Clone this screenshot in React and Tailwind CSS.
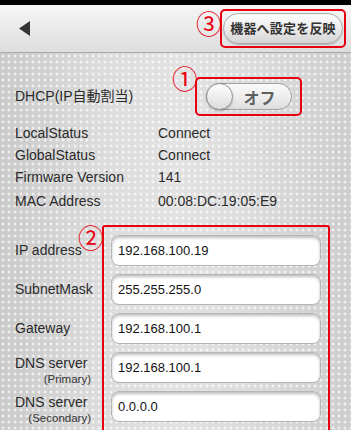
import React from 'react'

const font = { fontFamily: '"Liberation Sans", "Noto Sans CJK JP", sans-serif' }

const info = [
  ['LocalStatus', 'Connect'],
  ['GlobalStatus', 'Connect'],
  ['Firmware Version', '141'],
]

const fields = [
  { label: 'IP address', value: '192.168.100.19' },
  { label: 'SubnetMask', value: '255.255.255.0' },
  { label: 'Gateway', value: '192.168.100.1' },
  { label: 'DNS server', sub: '(Primary)', value: '192.168.100.1' },
  { label: 'DNS server', sub: '(Secondary)', value: '0.0.0.0' },
]

const Mark = ({ children, className }) => (
  <span className={`absolute text-[#e60012] text-[19px] leading-none font-['Noto_Sans_CJK_JP',sans-serif] ${className}`}>
    {children}
  </span>
)

const App = () => {
  return (
    <div className="w-[351px] h-[430px] overflow-hidden flex flex-col text-[#2b2b2b]" style={font}>
      <div className="h-[5px] bg-black shrink-0" />

      {/* barra superior */}
      <div className="h-[48px] shrink-0 flex items-center pl-[19px] pr-[5px] bg-linear-to-b from-[#f6f6f6] to-[#dedede] border-b border-[#a9a9a9] relative">
        <svg width="11" height="15" viewBox="0 0 11 15" className="mb-[1px]">
          <polygon points="0,7.5 11,0 11,15" fill="#333" />
        </svg>
        <div className="ml-auto relative">
          <Mark className="-left-[24px] top-[1px] scale-[1.35] origin-top-left">③</Mark>
          <div className="border-2 border-[#e60012] rounded-[5px] w-[126px] h-[39px] flex items-center justify-center">
            <button className="w-[120px] h-[31px] rounded-full border border-[#a8a8a8] bg-linear-to-b from-[#fdfdfd] via-[#ececec] to-[#d4d4d4] shadow-[0_1px_1px_rgba(0,0,0,0.2)] text-[13px] font-bold text-[#333] tracking-[0.2px]">
              機器へ設定を反映
            </button>
          </div>
        </div>
      </div>

      {/* cuerpo */}
      <div className="flex-1 bg-[image:radial-gradient(circle,rgba(255,255,255,0.65)_1.2px,transparent_1.8px),linear-gradient(to_right,#c9c9c9,#dcdcdc_30%,#e2e2e2_50%,#dcdcdc_70%,#cdcdcd)] bg-[length:6px_6px,100%_100%] pt-[24px]">
        <div className="flex items-center h-[39px] pr-[49px]">
          <span className="pl-[15px] flex-1 text-[14px]">DHCP(IP自動割当)</span>
          <div className="relative">
            <Mark className="-left-[23px] -top-[12px] scale-[1.35] origin-top-left">①</Mark>
            <div className="border-2 border-[#e60012] rounded-[5px] w-[107px] h-[39px] flex items-center justify-center">
              <div className="w-[86px] h-[27px] rounded-full border border-[#a0a0a0] bg-linear-to-b from-[#fafafa] via-[#eeeeee] to-[#dddddd] flex items-center relative">
                <div className="w-[27px] h-[27px] -ml-[1px] rounded-full border border-[#8f8f8f] bg-linear-to-b from-[#ffffff] to-[#dcdcdc] shadow-[0_1px_2px_rgba(0,0,0,0.3)]" />
                <span className="flex-1 text-center text-[16px] font-bold text-[#5f5f5f] font-['Noto_Sans_CJK_JP',sans-serif] pr-[4px]">オフ</span>
              </div>
            </div>
          </div>
        </div>

        <div className="mt-[6px] text-[14px]">
          {info.map(([k, v]) => (
            <div key={k} className="flex items-center h-[22px] pl-[15px]">
              <span className="w-[143px]">{k}</span>
              <span>{v}</span>
            </div>
          ))}
          <div className="flex items-center h-[22px] pl-[15px] mt-[2px]">
            <span className="w-[143px]">MAC Address</span>
            <span>00:08:DC:19:05:E9</span>
          </div>
        </div>

        <div className="flex mt-[13px]">
          <div className="w-[102px] relative pt-[10px] flex flex-col gap-[8px] text-[14px]">
            <Mark className="left-[78px] -top-[1px] scale-[1.35] origin-top-left">②</Mark>
            {fields.map((f, i) => (
              <div key={i} className="h-[31px] flex items-center pl-[15px]">
                {f.sub ? (
                  <div className="flex flex-col items-end w-[76px] pt-[5px]">
                    <span className="self-start leading-[19px] whitespace-nowrap">{f.label}</span>
                    <span className="text-[11.5px] leading-[13px] text-[#333] whitespace-nowrap">{f.sub}</span>
                  </div>
                ) : (
                  <span>{f.label}</span>
                )}
              </div>
            ))}
          </div>
          <div className="w-[228px] h-[220px] border-2 border-[#e60012] border-b-0 rounded-t-[3px] pt-[8px] px-[7px] flex flex-col gap-[8px]">
            {fields.map((f, i) => (
              <div key={i} className="h-[31px] rounded-[8px] bg-white border border-[#b5b5b5] shadow-[inset_0_2px_3px_rgba(0,0,0,0.25)] flex items-center pl-[6px] text-[13px] text-[#111]">
                {f.value}
              </div>
            ))}
          </div>
        </div>
      </div>
    </div>
  )
}

export default App
